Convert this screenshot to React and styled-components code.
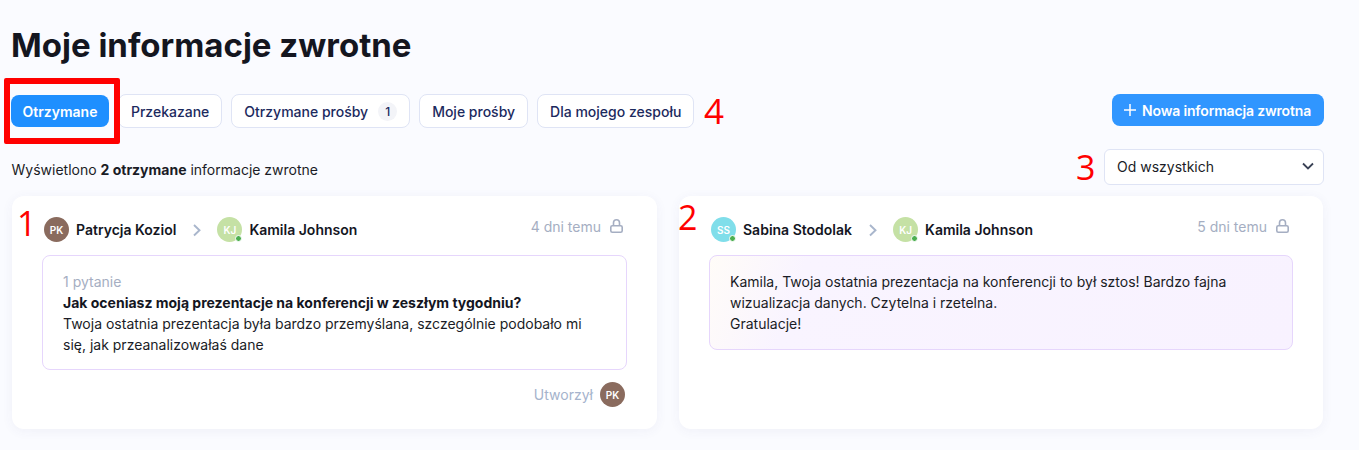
import React from "react";
import styled, { createGlobalStyle } from "styled-components";

const GlobalStyle = createGlobalStyle`
  html, body {
    margin: 0;
    padding: 0;
    background: #fafbff;
    font-family: Inter, "Noto Sans", sans-serif;
    overflow: hidden;
  }
`;

const Page = styled.div`
  position: relative;
  box-sizing: border-box;
  width: 1359px;
  height: 450px;
  padding: 26px 35px 0 12px;
  overflow: hidden;
`;

const Title = styled.h1`
  margin: 0 0 0 -1px;
  font-size: 33px;
  line-height: 38px;
  font-weight: 700;
  color: #14161f;
`;

const Toolbar = styled.div`
  display: flex;
  align-items: center;
  justify-content: space-between;
  margin-top: 30px;
  height: 34px;
`;

const Tabs = styled.div`
  display: flex;
  align-items: center;
  gap: 9px;
`;

const Tab = styled.button`
  box-sizing: border-box;
  display: flex;
  align-items: center;
  gap: 10px;
  height: ${(p) => (p.$active ? "32px" : "34px")};
  padding: 0 ${(p) => (p.$active ? "11.5px" : "12px")};
  margin-left: ${(p) => (p.$active ? "-1px" : "0")};
  border: ${(p) => (p.$active ? "none" : "1px solid #dfe4f5")};
  border-radius: 8px;
  background: ${(p) => (p.$active ? "#1e8fff" : "#fff")};
  color: ${(p) => (p.$active ? "#fff" : "#1c2a5e")};
  font: 500 14px Inter, sans-serif;
  font-weight: ${(p) => (p.$active ? 600 : 500)};
`;

const Count = styled.span`
  display: flex;
  align-items: center;
  justify-content: center;
  width: 19px;
  height: 19px;
  border-radius: 50%;
  background: #f3f4f8;
  font-size: 12px;
`;

const PrimaryButton = styled.button`
  display: flex;
  align-items: center;
  gap: 5px;
  box-sizing: border-box;
  height: 32px;
  margin: -2px 0 0 0;
  padding: 0 13px 0 11px;
  border: none;
  border-radius: 8px;
  background: #3096ff;
  color: #fff;
  font: 600 14px Inter, sans-serif;
  letter-spacing: -0.17px;
`;

const FilterRow = styled.div`
  display: flex;
  align-items: center;
  justify-content: space-between;
  margin-top: 21px;
  height: 36px;
`;

const Summary = styled.p`
  margin: 0 0 0 -0.5px;
  padding-top: 4px;
  font-size: 14px;
  color: #1a1c26;

  b {
    font-weight: 700;
  }
`;

const Select = styled.div`
  box-sizing: border-box;
  display: flex;
  align-items: center;
  justify-content: space-between;
  width: 220px;
  height: 36px;
  padding: 0 8px 2px 12px;
  border: 1px solid #dfe4f5;
  border-radius: 6px;
  background: #fff;
  font-size: 14px;
  color: #1a1c26;
`;

const Cards = styled.div`
  display: grid;
  grid-template-columns: 645px 644px;
  gap: 22px;
  margin-top: 11px;
  align-items: stretch;
`;

const Card = styled.article`
  box-sizing: border-box;
  height: 233px;
  padding: 21px 30px 0;
  border-radius: 12px;
  background: #fff;
  box-shadow: 0 2px 12px rgba(60, 70, 130, 0.06);
`;

const CardHeader = styled.header`
  display: flex;
  align-items: flex-start;
  justify-content: space-between;
  height: 38px;
  padding: 0 4px 0 2px;
`;

const People = styled.div`
  display: flex;
  align-items: center;
  height: 25px;
`;

const Avatar = styled.span`
  position: relative;
  flex: none;
  display: flex;
  align-items: center;
  justify-content: center;
  width: 25px;
  height: 25px;
  border-radius: 50%;
  background: ${(p) => p.$color};
  color: #fff;
  font-size: 10px;
  font-weight: 600;

  ${(p) =>
    p.$online &&
    `&::after {
      content: "";
      position: absolute;
      right: 0;
      bottom: 0;
      width: 5px;
      height: 5px;
      border: 1px solid #fff;
      border-radius: 50%;
      background: #4caf50;
    }`}
`;

const Name = styled.span`
  margin-left: 7px;
  font-size: 14px;
  font-weight: 600;
  color: #14161f;
`;

const Arrow = styled.svg`
  width: 12px;
  height: 14px;
  margin: 0 15px 0 14px;
  fill: none;
  stroke: #a9b6cc;
  stroke-width: 1.9;
`;

const Meta = styled.div`
  display: flex;
  align-items: center;
  gap: 9px;
  height: 18px;
  color: #a5aec2;
  font-size: 14px;
`;

const Lock = styled.svg`
  width: 13px;
  height: 14px;
  margin-top: -1px;
  fill: none;
  stroke: #a5aec2;
  stroke-width: 1.6;
`;

const MessageBox = styled.div`
  box-sizing: border-box;
  padding: 15px 20px ${(p) => (p.$tinted ? "15px" : "14px")};
  border: 1px solid #e6d6fc;
  border-radius: 8px;
  background: ${(p) =>
    p.$tinted
      ? "linear-gradient(110deg, #fffcf8 0%, #f9f4ff 16%, #f8f2ff 100%)"
      : "#fff"};
  font-size: 14px;
  line-height: 21px;
  color: #1a1c26;
`;

const Muted = styled.div`
  color: #a5aec2;
`;

const Question = styled.div`
  font-weight: 700;
  color: #14161f;
`;

const Footer = styled.footer`
  display: flex;
  align-items: center;
  justify-content: flex-end;
  gap: 7px;
  margin-top: 12px;
  padding-right: 2px;
  color: #a5b3cc;
  font-size: 14px;
`;

const RedFrame = styled.div`
  position: absolute;
  left: 4px;
  top: 78px;
  box-sizing: border-box;
  width: 116px;
  height: 66px;
  border: 6px solid #ff0000;
  border-radius: 2px;
`;

const Mark = styled.span`
  position: absolute;
  left: ${(p) => p.$x}px;
  top: ${(p) => p.$y}px;
  font: 400 ${(p) => p.$size || 34}px/36px "Open Sans", sans-serif;
  color: #ff0000;
`;

function Person({ initials, color, online, name }) {
  return (
    <>
      <Avatar $color={color} $online={online}>{initials}</Avatar>
      <Name>{name}</Name>
    </>
  );
}

function CardTop({ from, to, when }) {
  return (
    <CardHeader>
      <People>
        <Person {...from} />
        <Arrow viewBox="0 0 12 14"><path d="M4 2l5.5 5.2L4 12.5" /></Arrow>
        <Person {...to} />
      </People>
      <Meta>
        {when}
        <Lock viewBox="0 0 13 14">
          <rect x="0.8" y="6.8" width="11.4" height="6.4" rx="1.5" />
          <path d="M3.5 6.8V3.8a3 3 0 0 1 6 0v3" />
        </Lock>
      </Meta>
    </CardHeader>
  );
}

const patrycja = { initials: "PK", color: "#8a6b5e", name: "Patrycja Koziol" };
const kamila = { initials: "KJ", color: "#c5e1a5", online: true, name: "Kamila Johnson" };
const sabina = { initials: "SS", color: "#80deea", online: true, name: "Sabina Stodolak" };

export default function App() {
  return (
    <Page>
      <GlobalStyle />
      <Title>Moje informacje zwrotne</Title>
      <Toolbar>
        <Tabs>
          <Tab $active>Otrzymane</Tab>
          <Tab>Przekazane</Tab>
          <Tab>Otrzymane prośby <Count>1</Count></Tab>
          <Tab>Moje prośby</Tab>
          <Tab>Dla mojego zespołu</Tab>
        </Tabs>
        <PrimaryButton>
          <svg width="14" height="14" viewBox="0 0 14 14" fill="none" stroke="#fff" strokeWidth="1.5">
            <path d="M7 1v12M1 7h12" />
          </svg>
          Nowa informacja zwrotna
        </PrimaryButton>
      </Toolbar>
      <FilterRow>
        <Summary>Wyświetlono <b>2 otrzymane</b> informacje zwrotne</Summary>
        <Select>
          Od wszystkich
          <svg width="14" height="14" viewBox="0 0 14 14" fill="none" stroke="#3a4256" strokeWidth="1.8">
            <path d="M2 4.5l5 5 5-5" />
          </svg>
        </Select>
      </FilterRow>
      <Cards>
        <Card>
          <CardTop from={patrycja} to={kamila} when="4 dni temu" />
          <MessageBox>
            <Muted>1 pytanie</Muted>
            <Question>Jak oceniasz moją prezentacje na konferencji w zeszłym tygodniu?</Question>
            Twoja ostatnia prezentacja była bardzo przemyślana, szczególnie podobało mi
            <br />
            się, jak przeanalizowałaś dane
          </MessageBox>
          <Footer>
            Utworzył
            <Avatar $color={patrycja.color}>PK</Avatar>
          </Footer>
        </Card>
        <Card>
          <CardTop from={sabina} to={kamila} when="5 dni temu" />
          <MessageBox $tinted>
            Kamila, Twoja ostatnia prezentacja na konferencji to był sztos! Bardzo fajna
            <br />
            wizualizacja danych. Czytelna i rzetelna.
            <br />
            Gratulacje!
          </MessageBox>
        </Card>
      </Cards>
      <RedFrame />
      <Mark $x={17} $y={205}>1</Mark>
      <Mark $x={678} $y={199}>2</Mark>
      <Mark $x={1076} $y={149}>3</Mark>
      <Mark $x={704} $y={93} $size={35}>4</Mark>
    </Page>
  );
}
